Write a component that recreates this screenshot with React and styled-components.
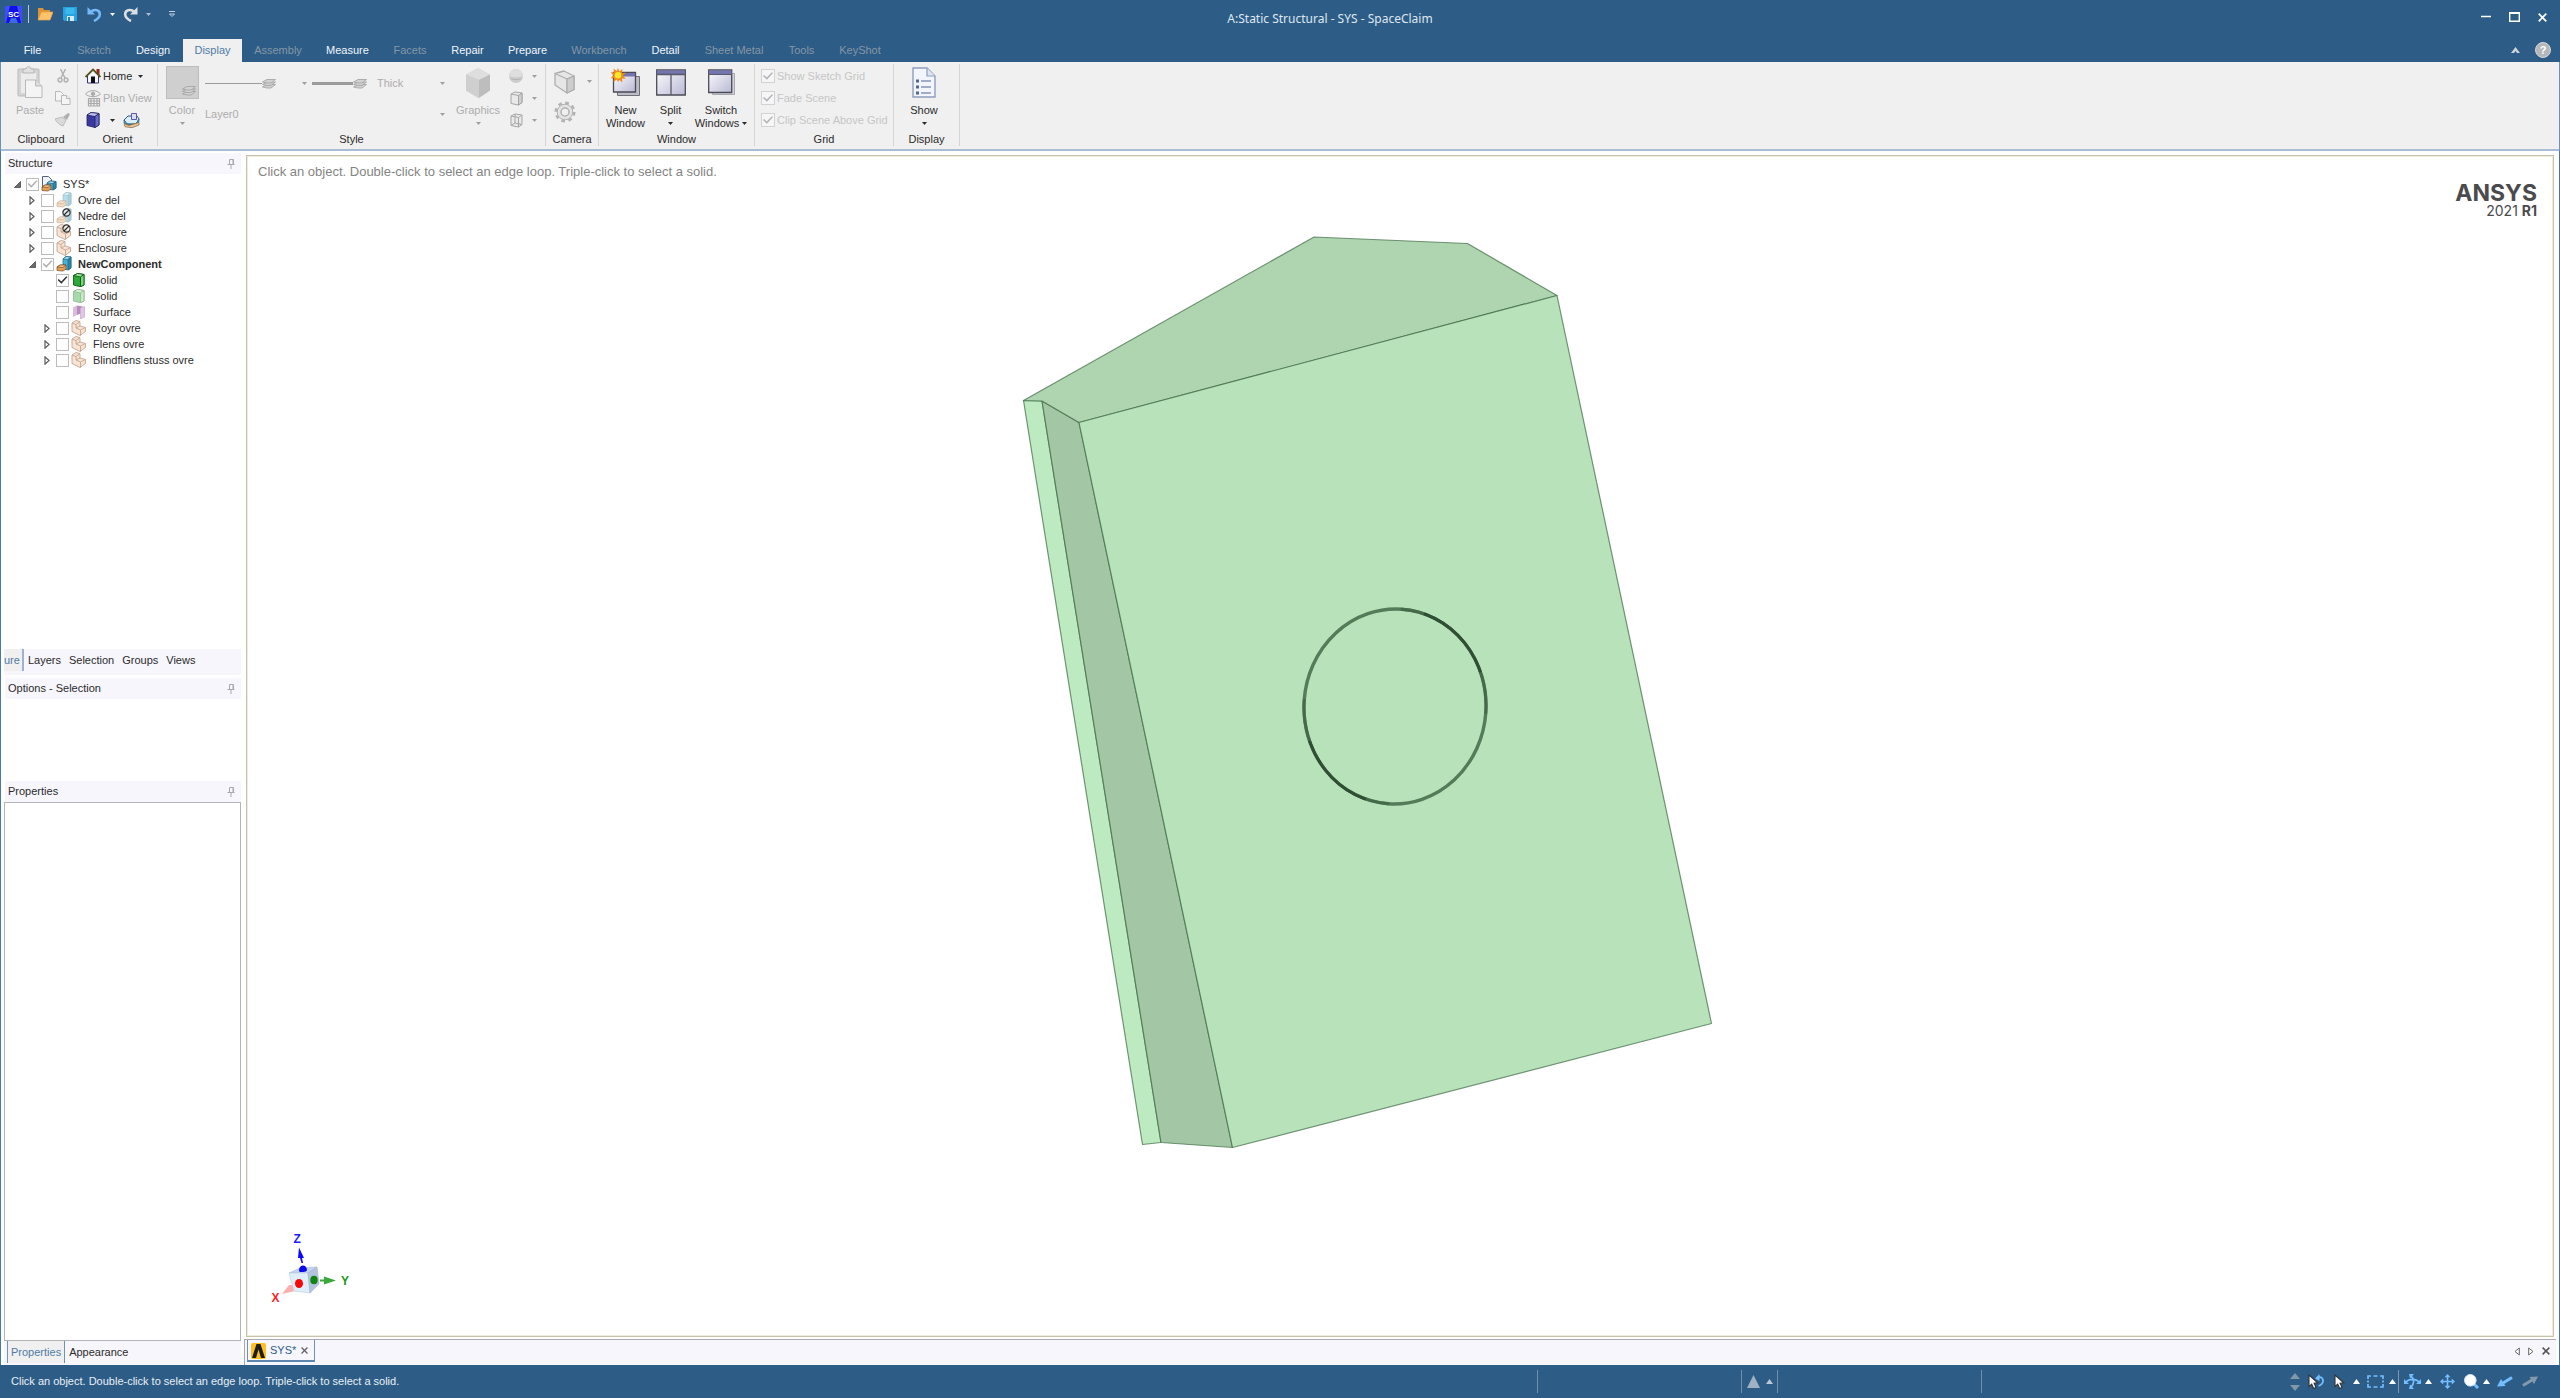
import { useState } from 'react';
import styled, { createGlobalStyle, css } from 'styled-components';

const colors = {
  blue: '#2d5d87',
  ribbon: '#f0f0f0',
  panel: '#f6f6fc',
  text: '#2b2b2b',
  muted: '#adadad',
  tabMuted: '#8495a5',
  accent: '#4f7ba6',
  sky: '#74bdff',
};

const GlobalStyle = createGlobalStyle`
  * {
    box-sizing: border-box;
  }
  body {
    margin: 0;
    color: ${colors.text};
    background: #fff;
    font-family: 'Liberation Sans', Arial, sans-serif;
    font-size: 11px;
    line-height: 13px;
  }
  button, input {
    font: inherit;
    color: inherit;
    margin: 0;
  }
  button {
    padding: 0;
    border: none;
    background: none;
    white-space: nowrap;
  }
  svg {
    display: block;
    flex: none;
  }
`;

const Page = styled.div`
  display: flex;
  flex-direction: column;
  min-height: 100vh;
`;

/* ---------- title bar ---------- */

const TopBar = styled.header`
  background: ${colors.blue};
  color: #fff;
`;

const TitleRow = styled.div`
  display: flex;
  height: 39px;
`;

const QuickAccess = styled.div`
  display: flex;
  align-items: center;
  width: 192px;
  height: 28px;
  padding-left: 5px;
`;

const QuickButton = styled.button`
  display: flex;
  flex: none;
  justify-content: center;
  width: ${({ $w }) => $w}px;
`;

const QuickDivider = styled.span`
  width: 1px;
  height: 18px;
  margin: 0 4px 0 6px;
  background: #b9c6d2;
`;

const WindowTitle = styled.h1`
  flex: 1;
  margin: 0;
  padding-top: 11px;
  text-align: center;
  font: 400 12px/16px 'Noto Sans', 'Open Sans', sans-serif;
  color: #dfe7ee;
`;

const WindowButtons = styled.div`
  display: flex;
  justify-content: flex-end;
  align-items: center;
  width: 92px;
  height: 34px;
  padding-right: 4px;
`;

const WindowButton = styled.button`
  display: flex;
  justify-content: center;
  width: 28px;
`;

const TabRow = styled.nav`
  display: flex;
  height: 23px;
  padding-right: 3px;
`;

const RibbonTab = styled.button`
  width: ${({ $w }) => $w}px;
  height: 23px;
  color: ${({ $off }) => ($off ? colors.tabMuted : '#f2f6fa')};
  ${({ $active }) =>
    $active &&
    css`
      color: ${colors.accent};
      background: ${colors.ribbon};
    `}
`;

const TabSpacer = styled.div`
  flex: 1;
`;

const TabGlyph = styled.span`
  display: flex;
  align-items: center;
  height: 21px;
`;

/* ---------- ribbon ---------- */

const Ribbon = styled.div`
  display: flex;
  height: 89px;
  padding: 2px 0 0 4px;
  background: ${colors.ribbon};
  border: 1px solid #6f93b8;
  border-width: 0 1px;
  box-shadow: inset 0 -1px #a9bdd6, inset 0 -2px #a9bdd6;
`;

const Group = styled.section`
  display: flex;
  flex-direction: column;
  width: ${({ $w }) => $w}px;
  height: 82px;
  border-right: 1px solid #d5d5d5;
`;

const GroupBody = styled.div`
  display: flex;
  flex: 1;
  padding: 1px ${({ $pad = 0 }) => $pad}px 0;
`;

const GroupTitle = styled.h2`
  margin: 0;
  height: 13px;
  font: inherit;
  text-align: center;
`;

const BigButton = styled.button`
  display: flex;
  flex-direction: column;
  align-items: center;
  width: ${({ $w }) => $w}px;
  height: 66px;
  color: ${({ disabled }) => (disabled ? colors.muted : colors.text)};
`;

const BigIcon = styled.span`
  display: flex;
  align-items: center;
  justify-content: center;
  height: 35px;
  margin-bottom: 4px;
`;

const CaretLine = styled.span`
  display: flex;
  align-items: center;
  height: 13px;
  gap: 3px;
`;

const Stack = styled.div`
  display: flex;
  flex-direction: column;
  flex: none;
  width: ${({ $w }) => ($w ? `${$w}px` : 'auto')};
`;

const StackRow = styled.div`
  display: flex;
  align-items: center;
  height: ${({ $h = 22 }) => $h}px;
  padding-left: ${({ $pad = 0 }) => $pad}px;
  padding-right: ${({ $end = 0 }) => $end}px;
`;

const SmallButton = styled.button`
  display: flex;
  align-items: center;
  gap: ${({ $gap = 2 }) => $gap}px;
  color: ${({ disabled }) => (disabled ? colors.muted : colors.text)};
`;

const IconSlot = styled.span`
  display: flex;
  justify-content: center;
  width: 16px;
`;

const CaretGap = styled.span`
  margin-left: 4px;
`;

const SpinGlyph = styled.span`
  margin-left: 8px;
`;

const LineCaret = styled.span`
  margin-left: 26px;
`;

const ColorSwatch = styled.span`
  display: flex;
  align-items: flex-end;
  justify-content: flex-end;
  width: 33px;
  height: 33px;
  padding: 2px;
  border: 1px solid #bdbdbd;
  background: #cfcfcf;
`;

const LineSample = styled.span`
  width: ${({ $w }) => $w}px;
  height: ${({ $thick }) => ($thick ? 3 : 1)}px;
  background: #9b9b9b;
`;

const LineGroup = styled.button`
  display: flex;
  align-items: center;
  margin-right: ${({ $gap }) => $gap}px;
`;

const MutedText = styled.span`
  flex: 1;
  color: ${colors.muted};
`;

const CheckLabel = styled.label`
  display: flex;
  align-items: center;
  gap: 2px;
  height: 22px;
  color: #c6c6c6;
`;

const CheckBox = styled.input.attrs({ type: 'checkbox' })`
  appearance: none;
  display: grid;
  place-items: center;
  flex: none;
  width: ${({ $big }) => ($big ? 14 : 13)}px;
  height: ${({ $big }) => ($big ? 14 : 13)}px;
  border: 1px solid ${({ $big }) => ($big ? '#d2d2d2' : '#bcbcbc')};
  background: ${({ $big }) => ($big ? '#f6f6f8' : '#fff')};
  &:checked::before {
    content: '';
    width: 10px;
    height: 9px;
    background: ${({ $tone = '#b4b4b4' }) => $tone};
    clip-path: polygon(0 50%, 12% 40%, 38% 68%, 88% 8%, 100% 18%, 39% 92%);
  }
`;

/* ---------- workspace ---------- */

const Workspace = styled.div`
  display: flex;
  flex: 1;
  border: 1px solid #4a78a6;
  border-width: 0 1px;
`;

const Sidebar = styled.aside`
  display: grid;
  grid-template-rows: 59fr 100px 66fr;
  row-gap: 3px;
  width: 243px;
  padding: 2px 3px 0 3px;
`;

const Panel = styled.section`
  display: flex;
  flex-direction: column;
  min-height: 0;
`;

const PanelHeader = styled.header`
  display: flex;
  justify-content: space-between;
  align-items: center;
  height: 21px;
  padding: 0 6px 0 3px;
  margin-left: 1px;
  background: ${colors.panel};
`;

const PanelTitle = styled.h2`
  margin: 0;
  font: inherit;
`;

const Tree = styled.ul`
  flex: 1;
  margin: 0;
  padding: 2px 0 0;
  list-style: none;
`;

const TreeRow = styled.li`
  display: flex;
  align-items: center;
  height: 16px;
  padding-left: ${({ $level }) => 6 + $level * 15}px;
  font-weight: ${({ $bold }) => ($bold ? 700 : 400)};
`;

const Expander = styled.button`
  display: flex;
  justify-content: center;
  width: 14px;
  margin-right: 2px;
`;

const TreeLabel = styled.label`
  display: flex;
  align-items: center;
  gap: 6px;
  margin-left: 2px;
  white-space: nowrap;
`;

const PanelTabs = styled.nav`
  display: flex;
  align-items: flex-start;
  height: 26px;
  background: ${colors.panel};
`;

const PanelTab = styled.button`
  height: 22px;
  padding: 0 4px;
  ${({ $active }) =>
    $active &&
    css`
      padding: 0 2px 0 0;
      color: ${colors.accent};
      background: ${colors.ribbon};
      border-right: 2px solid #9cb3cc;
    `}
`;

const PropertyBox = styled.div`
  flex: 1;
  border: 1px solid #b4b4b8;
`;

const BottomTabs = styled(PanelTabs)`
  height: 24px;
  padding-left: 3px;
`;

const BottomTab = styled.button`
  height: 22px;
  padding: 2px 4px 0;
  ${({ $active }) =>
    $active &&
    css`
      padding: 2px 3px 0 3px;
      color: ${colors.accent};
      background: ${colors.ribbon};
      border: 1px solid #6f93b8;
      border-width: 0 1px;
    `}
`;

const Main = styled.main`
  display: flex;
  flex-direction: column;
  flex: 1;
  min-width: 0;
  padding-top: 4px;
`;

const Viewport = styled.div`
  position: relative;
  flex: 1;
  margin: 0 5px 2px 2px;
  border: 1px solid #c6c2ac;
  background: #fff;
  box-shadow: inset 0 0 0 1px #eeece0;
`;

const Hint = styled.p`
  position: absolute;
  left: 11px;
  top: 8px;
  margin: 0;
  font-size: 13px;
  line-height: 15px;
  color: #848484;
`;

const Brand = styled.div`
  position: absolute;
  top: 26px;
  right: 16px;
  text-align: right;
  font-family: Inter, sans-serif;
  color: #4b4b4d;
`;

const BrandName = styled.div`
  font-size: 23px;
  font-weight: 700;
  line-height: 22px;
`;

const BrandVersion = styled.div`
  font-size: 14px;
  font-weight: 400;
  line-height: 14px;
`;

const ModelSvg = styled.svg`
  position: absolute;
  inset: 0;
  width: 100%;
  height: 100%;
`;

const TriadSvg = styled.svg`
  position: absolute;
  left: 15px;
  bottom: 32px;
`;

const DocumentBar = styled.nav`
  display: flex;
  align-items: flex-start;
  height: 26px;
  margin-right: 3px;
  padding: 0 3px 0 2px;
  background: ${colors.panel};
  border-top: 1px solid #a9a9ae;
  border-left: 1px solid #a9a9ae;
`;

const DocumentTab = styled.div`
  display: flex;
  align-items: center;
  gap: 4px;
  height: 22px;
  padding: 1px 5px 0 3px;
  border: 1px solid #6f93b8;
  border-top: none;
  border-bottom: 2px solid #5c86b0;
  color: ${colors.blue};
`;

const DocumentTools = styled.div`
  display: flex;
  align-items: center;
  height: 22px;
  margin-left: auto;
`;

const ToolButton = styled.button`
  display: flex;
  justify-content: center;
  width: ${({ $w }) => $w}px;
`;

/* ---------- status bar ---------- */

const StatusBar = styled.footer`
  display: flex;
  align-items: center;
  height: 33px;
  padding: 0 19px 0 11px;
  background: ${colors.blue};
  color: #e9eff5;
`;

const StatusText = styled.span`
  flex: 1;
`;

const StatusCell = styled.div`
  display: flex;
  align-items: center;
  justify-content: ${({ $end }) => ($end ? 'flex-end' : 'flex-start')};
  gap: 6px;
  width: ${({ $w }) => $w}px;
  height: 23px;
  padding-left: 5px;
  border-left: 1px solid #6f90ad;
`;

const StatusTools = styled.div`
  display: flex;
  align-items: center;
`;

const ToolDivider = styled.span`
  width: 1px;
  height: 23px;
  margin: 0 2px;
  background: #7f97ad;
`;

/* ---------- icons ---------- */

const Caret = ({ color = '#2b2b2b' }) => (
  <svg width="5" height="3" viewBox="0 0 5 3">
    <path d="M0 0h5L2.500 3z" fill={color} />
  </svg>
);

const UpArrow = ({ size = 7, color = '#fff' }) => (
  <svg width={size} height={size === 7 ? 5 : size} viewBox="0 0 10 10" preserveAspectRatio="none">
    <path d="M0 10h10L5 0z" fill={color} />
  </svg>
);

const AppLogo = () => (
  <svg width="17" height="17" viewBox="0 0 17 17">
    <rect width="17" height="17" fill="#1010e6" />
    <path d="M0 0h5L1 17H0zM12 0h5v17h-1z" fill="#3c4cff" />
    <path d="M6 12h5l2 5H4z" fill="#3c6be0" />
    <text x="8.500" y="11" fontSize="8" fontWeight="700" fill="#fff" textAnchor="middle" fontFamily="Liberation Sans">
      SC
    </text>
  </svg>
);

const FolderIcon = () => (
  <svg width="16" height="14" viewBox="0 0 16 14">
    <path d="M1 13V1h5l1 2h6v3" fill="#dd9434" />
    <path d="M1 13 4.500 5H16l-3 8z" fill="#ffc46b" stroke="#e8a244" strokeWidth=".7" />
  </svg>
);

const SaveIcon = () => (
  <svg width="14" height="14" viewBox="0 0 14 14">
    <path d="M0 0h14v14H1.500L0 12.500z" fill="#27a3de" />
    <path d="M2.500 1h9v6h-9z" fill="#3db8ee" />
    <path d="M4 9h7v5H4z" fill="#d7ecf5" />
    <path d="M5 10h2v4H5z" fill="#2581b0" />
  </svg>
);

const TurnIcon = ({ color, flip }) => (
  <svg width="15" height="15" viewBox="0 0 15 15">
    <g transform={flip ? 'translate(15 0) scale(-1 1)' : undefined}>
      <path d="M3 5C8 1.500 13 3 12.800 7.500 12.600 11 10 12.500 7 14" fill="none" stroke={color} strokeWidth="2.600" />
      <path d="M.5 0v7.500H8z" fill={color} />
    </g>
  </svg>
);

const MoreIcon = () => (
  <svg width="6" height="6" viewBox="0 0 6 6">
    <path d="M0 .5h6" stroke="#c3d0dc" />
    <path d="M.5 3h5L3 5.500z" fill="none" stroke="#c3d0dc" />
  </svg>
);

const MinIcon = () => (
  <svg width="10" height="10" viewBox="0 0 10 10">
    <path d="M0 4.500h10" stroke="#fff" strokeWidth="1.500" />
  </svg>
);

const MaxIcon = () => (
  <svg width="11" height="10" viewBox="0 0 11 10">
    <path d="M.7 1h9.600v8.300H.7z" fill="none" stroke="#fff" strokeWidth="1.400" />
    <path d="M0 1h11" stroke="#fff" strokeWidth="2" />
  </svg>
);

const CrossIcon = ({ size = 9, color = '#fff' }) => (
  <svg width={size} height={size} viewBox="0 0 9 9">
    <path d="m.7.7 7.600 7.600M8.300.7.7 8.300" stroke={color} strokeWidth="1.700" />
  </svg>
);

const HelpIcon = () => (
  <svg width="16" height="16" viewBox="0 0 16 16">
    <circle cx="8" cy="8" r="7.500" fill="#b4b8bb" stroke="#d4d6d8" />
    <text x="8" y="12" fontSize="11" fontWeight="700" fill="#fff" textAnchor="middle" fontFamily="Liberation Sans">
      ?
    </text>
  </svg>
);

const RibbonUpIcon = () => (
  <svg width="9" height="6" viewBox="0 0 9 6">
    <path d="M0 6 4.500 0 9 6H6L4.500 4 3 6z" fill="#cfd3d6" />
  </svg>
);

const PasteIcon = () => (
  <svg width="26" height="33" viewBox="0 0 26 33">
    <rect x="1" y="3" width="21" height="27" rx="1" fill="#d4d4d4" stroke="#bababa" />
    <rect x="4" y="7" width="15" height="20" fill="#ececec" />
    <path d="M6 3h3c0-3 5-3 5 0h3v4H6z" fill="#e0e0e0" stroke="#b5b5b5" />
    <path d="M8.500 14h10l6.500 6v11.500H8.500z" fill="#f4f4f4" stroke="#b9b9b9" />
    <path d="M18.500 14v6H25" fill="#ddd" stroke="#b9b9b9" />
  </svg>
);

const CutIcon = () => (
  <svg width="12" height="14" viewBox="0 0 12 14" fill="none" stroke="#b3b3b3" strokeWidth="1.500">
    <path d="M3.500 0 8 9M8.500 0 4 9" />
    <circle cx="3" cy="11" r="1.900" />
    <circle cx="9" cy="11" r="1.900" />
  </svg>
);

const CopyIcon = () => (
  <svg width="16" height="14" viewBox="0 0 16 14" fill="#f4f4f4" stroke="#b8b8b8">
    <path d="M.5.5h5l3 3V10h-8z" />
    <path d="M6.500 4.500h5l3.500 3v6H6.500z" />
    <path d="M11.500 4.500v3H15" />
  </svg>
);

const BrushIcon = () => (
  <svg width="16" height="14" viewBox="0 0 16 14">
    <path d="m0 6 7-2 4 3-3 6c-3-1-6-3-8-7z" fill="#dadada" stroke="#bcbcbc" />
    <path d="m8 4 5-4 2 1-3 6z" fill="#b0b0b0" />
  </svg>
);

const HomeIcon = () => (
  <svg width="16" height="16" viewBox="0 0 16 16">
    <path d="M11.500 1h3v6h-3z" fill="#9b2323" />
    <path d="M2.500 7.500V15h11V7.500L8 2z" fill="#f5f5ff" stroke="#34347e" />
    <path d="M.5 9 8 1.500 15.500 9" fill="none" stroke="#55551c" strokeWidth="1.800" />
    <path d="M6 8.500h4V15H6z" fill="#111" />
  </svg>
);

const PlanViewIcon = () => (
  <svg width="16" height="17" viewBox="0 0 16 17" fill="none" stroke="#a9a9a9">
    <path d="M.5 4C4-.5 12-.5 15.500 4 12 7.500 4 7.500.5 4z" />
    <circle cx="8" cy="3.800" r="1.700" fill="#a9a9a9" />
    <path d="M3.500 8.500h11v7.500h-11zM3.500 11h11M3.500 13.500h11M6 8.500V16M9 8.500V16M12 8.500V16" strokeWidth="1.200" />
  </svg>
);

const BlueBoxIcon = () => (
  <svg width="14" height="16" viewBox="0 0 14 16" stroke="#20205e" strokeWidth=".8">
    <path d="m1 3 4-2.500 8 1V13l-4 2.500-8-2z" fill="#3a3a9e" />
    <path d="m1 3 4-2.500 8 1L9 4.500z" fill="#c2c2f2" />
    <path d="m9 4.500 4-3V13l-4 2.500z" fill="#6a6acb" />
  </svg>
);

const SpinModelIcon = () => (
  <svg width="17" height="16" viewBox="0 0 17 16">
    <path d="m1 8 4-4h9l2 3-3 5H4z" fill="#d9eef6" stroke="#2e5b78" />
    <path d="m1 8 3 4h9l3-5v3l-3 3H4l-3-2z" fill="#55a7c5" stroke="#2e5b78" strokeWidth=".6" />
    <path d="M8.500 1.500h5v6h-5z" fill="#dedcf8" stroke="#5a5aa8" />
    <path d="m1 11.500 5 2 10-3v2.500l-7 2.700-7-1z" fill="#edc596" stroke="#80603a" strokeWidth=".7" />
  </svg>
);

const LayerStackIcon = () => (
  <svg width="14" height="10" viewBox="0 0 14 10" fill="#d2d2d2" stroke="#9f9f9f" strokeWidth=".8">
    <path d="m.5 8 4.500-2.500h8.500L9 9H5z" />
    <path d="m.5 5.500 4.500-2.500h8.500L9 6.500H5z" />
    <path d="m.5 3 4.500-2.500h8.500L9 4H5z" />
  </svg>
);

const GrayCube = () => (
  <svg width="26" height="32" viewBox="0 0 26 32">
    <path d="M1 7.500 13 1l12 6.500v16L13 31 1 23.500z" fill="#d6d6d6" />
    <path d="M1 7.500 13 1l12 6.500L14 13z" fill="#dedede" />
    <path d="M14 13 25 7.500v16L14 31z" fill="#bdbdbd" />
    <path d="M1 7.500 14 13v18L1 23.500z" fill="#cfcfcf" />
  </svg>
);

const SphereIcon = () => (
  <svg width="14" height="14" viewBox="0 0 14 14">
    <circle cx="7" cy="7" r="7" fill="#cdcdcd" />
    <path d="M0 7a7 7 0 0 1 14 0c-4 1.500-10 1.500-14 0z" fill="#dedede" />
    <path d="M2 9.500c3 1.500 7 1.500 10 0" stroke="#b3b3b3" fill="none" />
  </svg>
);

const BoxIcon = ({ wire }) => (
  <svg width="13" height="15" viewBox="0 0 13 15" fill="#e9e9e9" stroke="#a6a6a6" strokeLinejoin="round">
    <path d="m1 3 4-2 7 1v9.500L8.500 14 1 12.500z" />
    <path d="m1 3 7.500 1.500L12 2M8.500 4.500V14" />
    {wire ? <path d="M5 1v9l7 1.500M5 10l-4 2.500" fill="none" /> : <path d="m8.500 4.500 3.500-2.500v9.500L8.500 14z" fill="#cfcfcf" />}
  </svg>
);

const CameraBox = () => (
  <svg width="21" height="24" viewBox="0 0 21 24" fill="#e6e6e6" stroke="#aeaeae" strokeWidth="1.300" strokeLinejoin="round">
    <path d="M1 3.500 10 1l10 5v13.500L13 23 1 15z" />
    <path d="m1 3.500 12 5.500 7-3M13 9v14" />
    <path d="m13 9 7-3v13.500L13 23z" fill="#cdcdcd" />
  </svg>
);

const GearIcon = () => (
  <svg width="22" height="22" viewBox="0 0 22 22">
    <circle cx="11" cy="11" r="9.200" fill="none" stroke="#b2b2b2" strokeWidth="2.600" strokeDasharray="3.600 3.630" />
    <circle cx="11" cy="11" r="7.800" fill="#e3e3e3" stroke="#b2b2b2" />
    <circle cx="11" cy="11" r="4" fill="#f0f0f0" stroke="#b2b2b2" strokeWidth="1.500" />
  </svg>
);

const Gradient = ({ id }) => (
  <linearGradient id={id} x1="0" y1="0" x2="1" y2="1">
    <stop offset="0" stopColor="#fcfcff" />
    <stop offset="1" stopColor="#b9b9d4" />
  </linearGradient>
);

const NewWindowIcon = () => (
  <svg width="30" height="30" viewBox="0 0 30 30">
    <defs>
      <Gradient id="nw" />
    </defs>
    <path d="M6.500 8.500h22v19h-22z" fill="#bcbcc8" stroke="#6f6f78" />
    <path d="M2.500 4.500h22V24h-22z" fill="url(#nw)" stroke="#4b4b55" strokeWidth="1.300" />
    <path d="M3 5h21v3.500H3z" fill="#7474b0" />
    <path
      d="m7 0 1.300 3.500L11.500 1l-.6 4 4-.3-3 3 3 3-4-.3.600 4-3.200-2.500L7 14l-1.300-2.600L2.500 14l.6-4-3.600.3 3-3-3-3 3.600.3-.6-4 3.200 2.500z"
      fill="#f08a1c"
    />
    <circle cx="7" cy="7.300" r="3.300" fill="#ffe926" />
  </svg>
);

const SplitIcon = () => (
  <svg width="30" height="27" viewBox="0 0 30 27">
    <defs>
      <Gradient id="sp" />
    </defs>
    <path d="M.7 1h28.600v25H.7z" fill="url(#sp)" stroke="#4b4b55" strokeWidth="1.300" />
    <path d="M1 1.500h28V5H1z" fill="#7474b0" />
    <path d="M0 5.500h30M15 5v21" stroke="#5a5a66" strokeWidth="1.300" />
  </svg>
);

const SwitchIcon = () => (
  <svg width="27" height="27" viewBox="0 0 27 27">
    <defs>
      <Gradient id="sw" />
    </defs>
    <path d="M4.500 4.500h22v21h-22z" fill="#d2d2dc" stroke="#a9a9b2" />
    <path d="M.7 1h23v22.500H.7z" fill="url(#sw)" stroke="#4b4b55" strokeWidth="1.300" />
    <path d="M1 1.500h22.500V5H1z" fill="#7474b0" />
    <path d="M0 5.500h24" stroke="#5a5a66" />
  </svg>
);

const ShowIcon = () => (
  <svg width="24" height="31" viewBox="0 0 24 31">
    <path d="M1 1h14l8 8v21H1z" fill="#f2f5fb" stroke="#8f9dbd" strokeWidth="1.400" />
    <path d="M15 1v8h8" fill="#dfe4f0" stroke="#8f9dbd" strokeWidth="1.200" />
    <path d="M9 14h10M9 20h10M9 26h10" stroke="#8795b8" strokeWidth="1.500" />
    <path d="M4 14h3M4 20h3M4 26h3" stroke="#55658f" strokeWidth="3" />
  </svg>
);

const PinIcon = () => (
  <svg width="8" height="10" viewBox="0 0 8 10" fill="none" stroke="#a8a8ae">
    <path d="M2.500.5h4v5h-4zM.5 5.500h7M4 6v4" />
    <path d="M6 1v4" />
  </svg>
);

const OpenNode = () => (
  <svg width="7" height="7" viewBox="0 0 7 7">
    <path d="M6.500.5v6h-6z" fill="#6c6c6c" stroke="#4a4a4a" strokeWidth=".8" />
  </svg>
);

const ClosedNode = () => (
  <svg width="6" height="9" viewBox="0 0 6 9">
    <path d="M1 .8v7.400l4-3.700z" fill="#fff" stroke="#5c5c5c" strokeWidth="1.200" />
  </svg>
);

const Hidden = () => (
  <g fill="#f4f4f4" fillOpacity=".6" stroke="#303030" strokeWidth="1.200">
    <circle cx="10.500" cy="4.500" r="3.600" />
    <path d="m8 7 5-5" />
  </g>
);

const ComponentIcon = ({ faded, hidden, doc }) => (
  <svg width="16" height="16" viewBox="0 0 16 16">
    {doc && <path d="M1.500.5h6l3 3V13h-9z" fill="#eef2fa" stroke="#56617c" />}
    <g opacity={faded ? 0.4 : 1} strokeWidth=".7">
      <path d={doc ? 'm6 7 3-2 6 .5v6.500l-3 2-6-1z' : 'm7 3 3-2.500 5 .5v11l-3 2-5-1z'} fill="#45b3d6" stroke="#24627e" />
      <path d={doc ? 'm6 7 3-2 6 .5-3 2z' : 'm7 3 3-2.500 5 .5-3 2.500z'} fill="#a4dcf0" stroke="#24627e" />
      <path d={doc ? 'm12 7.500 3-2v6.500l-3 2z' : 'M12 3.500 15 1v11l-3 2z'} fill="#2a87aa" stroke="#24627e" />
      <path d="m1 11 3-2h6v4l-3 2-6-.5z" fill="#e5a05c" stroke="#7b4a1c" />
      <path d="m1 11 3-2h6l-3 2.500z" fill="#f4c693" stroke="#7b4a1c" />
    </g>
    {hidden && <Hidden />}
  </svg>
);

const StepIcon = ({ hidden }) => (
  <svg width="16" height="16" viewBox="0 0 16 16">
    <g stroke="#c4a692" strokeWidth=".9" strokeLinejoin="round">
      <path d="m1 3 4-2.500 4 1V6l5.500 1.500v4L9 15.500l-8-4z" fill="#f8e4d5" />
      <path d="m1 3 4 1.500V8l4.500 2v5.500M5 4.500l4-3M5 8l4-2M9.500 10l5-2.500" fill="none" />
    </g>
    {hidden && <Hidden />}
  </svg>
);

const SolidIcon = ({ faded }) => (
  <svg width="14" height="14" viewBox="0 0 14 14" opacity={faded ? 0.42 : 1}>
    <g stroke="#0e5a14" strokeWidth=".9" strokeLinejoin="round">
      <path d="m1.500 2.500 4-2 6.500 1V12l-3.500 1.700-7-1.700z" fill="#2fa83a" />
      <path d="m1.500 2.500 4-2 6.500 1L8.500 4z" fill="#a6eaa2" />
      <path d="M8.500 4 12 1.500V12l-3.500 1.700z" fill="#7cd67c" />
    </g>
  </svg>
);

const SurfaceIcon = () => (
  <svg width="14" height="14" viewBox="0 0 14 14">
    <path d="m1 2.500 4-2v9.500l-4 2z" fill="#dcb9de" />
    <path d="m5 .5 6 1-2.500 2v5L5 10z" fill="#b58cbc" />
    <path d="M8.500 3.500 12.500 1.500V12l-4 2z" fill="#e3c6e6" stroke="#c39cc8" strokeWidth=".6" />
  </svg>
);

const DocIcon = () => (
  <svg width="15" height="16" viewBox="0 0 15 16">
    <rect width="15" height="16" rx="2" fill="#ffbf1f" />
    <path d="M5.500 1h4L14 15h-4L7.500 6.500 5 15H1z" fill="#1d1d1b" />
  </svg>
);

const SideArrow = ({ flip }) => (
  <svg width="6" height="9" viewBox="0 0 6 9">
    <path d={flip ? 'M.7 1v7L5 4.500z' : 'M5.300 1v7L1 4.500z'} fill="#fff" stroke="#666" />
  </svg>
);

const CursorPath = () => (
  <path
    d="M1 1v11.500l2.700-2.300 2 4.300 2.300-1-1.900-4.200 3.600-.4z"
    fill="#fff"
    stroke="#333"
    strokeWidth="1.100"
  />
);

const CursorIcon = () => (
  <svg width="12" height="16" viewBox="0 0 12 16">
    <CursorPath />
  </svg>
);

const CursorUndoIcon = () => (
  <svg width="17" height="16" viewBox="0 0 17 16">
    <path d="M9 4c4-2 6.500 0 6 3.500-.3 2.500-2 3.500-4.500 4.500" fill="none" stroke={colors.sky} strokeWidth="1.800" />
    <path d="M7 4.500 11.500 0v7z" fill={colors.sky} />
    <CursorPath />
  </svg>
);

const MarqueeIcon = () => (
  <svg width="17" height="13" viewBox="0 0 17 13">
    <path
      d="M1 4V1h3M6.500 1h4M13 1h3v3M16 5.500v2M16 9v3h-3M10.500 12h-4M4 12H1V9M1 7.500v-2"
      fill="none"
      stroke={colors.sky}
      strokeWidth="1.700"
    />
  </svg>
);

const OrbitIcon = () => (
  <svg width="17" height="15" viewBox="0 0 17 15">
    <path d="M2 8c3-3.500 10-3.500 13 0M7 2c3.500 3 3.500 8 0 11" fill="none" stroke={colors.sky} strokeWidth="1.700" />
    <path d="M0 5v5h5zM17 5v5h-5zM5 0h5L6 4.500zM5 15h5L6 10.500z" fill={colors.sky} />
  </svg>
);

const PanIcon = () => (
  <svg width="15" height="15" viewBox="0 0 15 15">
    <path d="M7.500 2v11M2 7.500h11" stroke={colors.sky} strokeWidth="1.600" />
    <path d="m7.500 0 3 3.300h-6zM7.500 15l3-3.300h-6zM0 7.500l3.300-3v6zM15 7.500l-3.300-3v6z" fill={colors.sky} />
  </svg>
);

const ZoomIcon = () => (
  <svg width="15" height="15" viewBox="0 0 15 15">
    <path d="m9 9 5 5" stroke={colors.sky} strokeWidth="3" />
    <circle cx="6.300" cy="6.300" r="5.800" fill="#fff" stroke="#cfe6fb" />
  </svg>
);

const DiagonalArrow = ({ color, up }) => (
  <svg width="16" height="11" viewBox="0 0 16 11">
    <g transform={up ? 'rotate(180 8 5.500)' : undefined}>
      <path d="m15 1.500-9 5.500" stroke={color} strokeWidth="3" />
      <path d="M0 10.500 4 3l4.500 7z" fill={color} />
    </g>
  </svg>
);

const UpDownIcon = () => (
  <svg width="10" height="18" viewBox="0 0 10 18" fill="#8197aa">
    <path d="M0 6h10L5 0zM0 12h10l-5 6z" />
  </svg>
);

/* ---------- scene ---------- */

const edge = { stroke: '#3f6a45', strokeOpacity: 0.7, strokeWidth: 1.2, strokeLinejoin: 'round' };

const Model = () => (
  <ModelSvg viewBox="247 156 2306 1180">
    <g {...edge}>
      <path d="M1023.500 400.500 1042 401 1161 1142.500 1142.500 1144.500z" fill="#bdeac1" />
      <path d="M1042 401 1079 422.500 1232.500 1147.500 1161 1142.500z" fill="#a3c7a5" />
      <path d="M1023.500 400.500 1314 237 1467.500 243.500 1557 295.500 1079 422.500 1042 401z" fill="#aed5af" />
      <path d="M1079 422.500 1557 295.500 1711.500 1023.500 1232.500 1147.500z" fill="#b8e2ba" />
    </g>
    <g fill="none" transform="rotate(4 1395 706.500)" strokeLinecap="round">
      <ellipse cx="1395" cy="706.500" rx="91" ry="97.500" stroke="#557c59" strokeWidth="3.400" />
      <path
        d="M1395 609A91 97.500 0 0 1 1486 706.500M1395 804A91 97.500 0 0 1 1304 706.500"
        stroke="#456a4a"
        strokeWidth="2.800"
      />
      <path
        d="M1418.600 612.300A91 97.500 0 0 1 1477.500 665.300M1371.400 800.700A91 97.500 0 0 1 1312.500 747.700"
        stroke="#2f4e33"
        strokeWidth="2.800"
      />
    </g>
  </ModelSvg>
);

const Triad = () => (
  <TriadSvg width="92" height="74" viewBox="262 1230 92 74" fontFamily="Liberation Sans" fontSize="12" fontWeight="700">
    <path d="m282 1294 7-9h9l-3 6z" fill="#fbb0b0" />
    <path d="m289 1273 11-5 17-1-9 6z" fill="#c6d4ec" stroke="#a9bbd8" strokeWidth=".6" />
    <path d="m289 1273 19 0 2 20-16-2z" fill="#e0eefa" stroke="#b9cce2" strokeWidth=".6" />
    <path d="m308 1273 9-6 2 17-9 9z" fill="#b4c3de" stroke="#a2b3d0" strokeWidth=".6" />
    <path d="M299 1247.500 304 1258h-2l1 5-1.500 0-1.500-5h-2z" fill="#0a0aff" />
    <path d="M299 1271a4 5 0 0 1 8-1c0 1-2 2-4 2s-4 0-4-1z" fill="#0a0af0" />
    <ellipse cx="299" cy="1283.500" rx="4" ry="4.500" fill="#f80808" />
    <ellipse cx="314" cy="1280" rx="3.700" ry="4.300" fill="#118511" />
    <path d="M320 1279.500h4v-3l12 4-12 4v-3h-4z" fill="#3aa83a" />
    <text x="293.500" y="1243" fill="#1a1aff">Z</text>
    <text x="341" y="1285" fill="#1c951c">Y</text>
    <text x="271.500" y="1302" fill="#f22">X</text>
  </TriadSvg>
);

/* ---------- data ---------- */

const ribbonTabs = [
  { name: 'File', width: 65 },
  { name: 'Sketch', width: 58, off: true },
  { name: 'Design', width: 60 },
  { name: 'Display', width: 59 },
  { name: 'Assembly', width: 72, off: true },
  { name: 'Measure', width: 67 },
  { name: 'Facets', width: 58, off: true },
  { name: 'Repair', width: 57 },
  { name: 'Prepare', width: 63 },
  { name: 'Workbench', width: 80, off: true },
  { name: 'Detail', width: 53 },
  { name: 'Sheet Metal', width: 84, off: true },
  { name: 'Tools', width: 51, off: true },
  { name: 'KeyShot', width: 66, off: true },
];

const treeItems = [
  { label: 'SYS*', level: 0, node: 'open', checked: true, icon: <ComponentIcon doc /> },
  { label: 'Ovre del', level: 1, node: 'closed', icon: <ComponentIcon faded /> },
  { label: 'Nedre del', level: 1, node: 'closed', icon: <ComponentIcon faded hidden /> },
  { label: 'Enclosure', level: 1, node: 'closed', icon: <StepIcon hidden /> },
  { label: 'Enclosure', level: 1, node: 'closed', icon: <StepIcon /> },
  { label: 'NewComponent', level: 1, node: 'open', checked: true, bold: true, icon: <ComponentIcon /> },
  { label: 'Solid', level: 2, checked: true, dark: true, icon: <SolidIcon /> },
  { label: 'Solid', level: 2, icon: <SolidIcon faded /> },
  { label: 'Surface', level: 2, icon: <SurfaceIcon /> },
  { label: 'Royr ovre', level: 2, node: 'closed', icon: <StepIcon /> },
  { label: 'Flens ovre', level: 2, node: 'closed', icon: <StepIcon /> },
  { label: 'Blindflens stuss ovre', level: 2, node: 'closed', icon: <StepIcon /> },
];

const gridOptions = ['Show Sketch Grid', 'Fade Scene', 'Clip Scene Above Grid'];

const hint = 'Click an object. Double-click to select an edge loop. Triple-click to select a solid.';

/* ---------- components ---------- */

const RibbonGroup = ({ title, width, pad, children }) => (
  <Group $w={width}>
    <GroupBody $pad={pad}>{children}</GroupBody>
    <GroupTitle>{title}</GroupTitle>
  </Group>
);

const TopSection = () => {
  const [active, setActive] = useState('Display');
  return (
    <TopBar>
      <TitleRow>
        <QuickAccess>
          <AppLogo />
          <QuickDivider />
          <QuickButton $w={24} aria-label="Open"><FolderIcon /></QuickButton>
          <QuickButton $w={26} aria-label="Save"><SaveIcon /></QuickButton>
          <QuickButton $w={23} aria-label="Undo"><TurnIcon color="#74b8f5" /></QuickButton>
          <QuickButton $w={12} aria-label="Undo list"><Caret color="#fff" /></QuickButton>
          <QuickButton $w={24} aria-label="Redo"><TurnIcon color="#dcdfe2" flip /></QuickButton>
          <QuickButton $w={12} aria-label="Redo list"><Caret color="#aebccb" /></QuickButton>
          <QuickButton $w={36} aria-label="Customize"><MoreIcon /></QuickButton>
        </QuickAccess>
        <WindowTitle>A:Static Structural - SYS - SpaceClaim</WindowTitle>
        <WindowButtons>
          <WindowButton aria-label="Minimize"><MinIcon /></WindowButton>
          <WindowButton aria-label="Maximize"><MaxIcon /></WindowButton>
          <WindowButton aria-label="Close"><CrossIcon /></WindowButton>
        </WindowButtons>
      </TitleRow>
      <TabRow>
        {ribbonTabs.map(({ name, off, width }) => (
          <RibbonTab key={name} $w={width} $off={off} $active={active === name} onClick={() => setActive(name)}>
            {name}
          </RibbonTab>
        ))}
        <TabSpacer />
        <WindowButton aria-label="Collapse ribbon"><TabGlyph><RibbonUpIcon /></TabGlyph></WindowButton>
        <WindowButton aria-label="Help"><TabGlyph><HelpIcon /></TabGlyph></WindowButton>
      </TabRow>
    </TopBar>
  );
};

const RibbonSection = () => (
  <Ribbon>
    <RibbonGroup title="Clipboard" width={73}>
      <BigButton $w={50} disabled>
        <BigIcon><PasteIcon /></BigIcon>
        Paste
      </BigButton>
      <Stack>
        {[<CutIcon key="Cut" />, <CopyIcon key="Copy" />, <BrushIcon key="Format" />].map((icon) => (
          <StackRow key={icon.key}>
            <SmallButton disabled aria-label={icon.key}><IconSlot>{icon}</IconSlot></SmallButton>
          </StackRow>
        ))}
      </Stack>
    </RibbonGroup>
    <RibbonGroup title="Orient" width={80} pad={7}>
      <Stack>
        <StackRow>
          <SmallButton><HomeIcon />Home<CaretGap><Caret /></CaretGap></SmallButton>
        </StackRow>
        <StackRow>
          <SmallButton disabled><PlanViewIcon />Plan View</SmallButton>
        </StackRow>
        <StackRow $pad={1}>
          <SmallButton $gap={10} aria-label="Orientation"><BlueBoxIcon /><Caret /></SmallButton>
          <SmallButton aria-label="Spin"><SpinGlyph><SpinModelIcon /></SpinGlyph></SmallButton>
        </StackRow>
      </Stack>
    </RibbonGroup>
    <RibbonGroup title="Style" width={388} pad={1}>
      <BigButton $w={46} disabled>
        <BigIcon><ColorSwatch><LayerStackIcon /></ColorSwatch></BigIcon>
        Color
        <CaretLine><Caret color="#a0a0a0" /></CaretLine>
      </BigButton>
      <Stack $w={243}>
        <StackRow $h={37} $end={3}>
          <LineGroup disabled aria-label="Line style" $gap={5}>
            <LineSample $w={57} />
            <LayerStackIcon />
            <LineCaret><Caret color="#a0a0a0" /></LineCaret>
          </LineGroup>
          <LineGroup disabled aria-label="Line weight" $gap={10}>
            <LineSample $w={41} $thick />
            <LayerStackIcon />
          </LineGroup>
          <MutedText>Thick</MutedText>
          <Caret color="#a0a0a0" />
        </StackRow>
        <StackRow $h={24} $end={3}>
          <MutedText>Layer0</MutedText>
          <Caret color="#a0a0a0" />
        </StackRow>
      </Stack>
      <BigButton $w={60} disabled>
        <BigIcon><GrayCube /></BigIcon>
        Graphics
        <CaretLine><Caret color="#a0a0a0" /></CaretLine>
      </BigButton>
      <Stack>
        {[<SphereIcon key="Shaded" />, <BoxIcon key="Edges" />, <BoxIcon key="Wireframe" wire />].map((icon) => (
          <StackRow key={icon.key}>
            <SmallButton $gap={8} disabled aria-label={icon.key}>
              <IconSlot>{icon}</IconSlot>
              <Caret color="#a0a0a0" />
            </SmallButton>
          </StackRow>
        ))}
      </Stack>
    </RibbonGroup>
    <RibbonGroup title="Camera" width={53} pad={8}>
      <Stack>
        <StackRow $h={33}>
          <SmallButton $gap={12} disabled aria-label="Projection"><CameraBox /><Caret color="#a0a0a0" /></SmallButton>
        </StackRow>
        <StackRow $h={28}>
          <SmallButton disabled aria-label="Camera options"><GearIcon /></SmallButton>
        </StackRow>
      </Stack>
    </RibbonGroup>
    <RibbonGroup title="Window" width={156} pad={2}>
      <BigButton $w={49}>
        <BigIcon><NewWindowIcon /></BigIcon>
        New
        <CaretLine>Window</CaretLine>
      </BigButton>
      <BigButton $w={41}>
        <BigIcon><SplitIcon /></BigIcon>
        Split
        <CaretLine><Caret /></CaretLine>
      </BigButton>
      <BigButton $w={60}>
        <BigIcon><SwitchIcon /></BigIcon>
        Switch
        <CaretLine>Windows<Caret /></CaretLine>
      </BigButton>
    </RibbonGroup>
    <RibbonGroup title="Grid" width={139} pad={6}>
      <Stack>
        {gridOptions.map((option) => (
          <CheckLabel key={option}>
            <CheckBox $big defaultChecked disabled />
            {option}
          </CheckLabel>
        ))}
      </Stack>
    </RibbonGroup>
    <RibbonGroup title="Display" width={66} pad={2}>
      <BigButton $w={56}>
        <BigIcon><ShowIcon /></BigIcon>
        Show
        <CaretLine><Caret /></CaretLine>
      </BigButton>
    </RibbonGroup>
  </Ribbon>
);

const StructureTree = () => (
  <Tree>
    {treeItems.map(({ label, level, node, checked, bold, dark, icon }, i) => (
      <TreeRow key={i} $level={level} $bold={bold}>
        <Expander aria-label={node ? `Toggle ${label}` : undefined} disabled={!node}>
          {node === 'open' && <OpenNode />}
          {node === 'closed' && <ClosedNode />}
        </Expander>
        <CheckBox id={`node-${i}`} defaultChecked={checked} $tone={dark ? '#333' : '#b0b0b0'} />
        <TreeLabel htmlFor={`node-${i}`}>
          <IconSlot>{icon}</IconSlot>
          {label}
        </TreeLabel>
      </TreeRow>
    ))}
  </Tree>
);

const SidePanels = () => (
  <Sidebar>
    <Panel>
      <PanelHeader>
        <PanelTitle>Structure</PanelTitle>
        <PinIcon />
      </PanelHeader>
      <StructureTree />
      <PanelTabs>
        <PanelTab $active aria-label="Structure">ure</PanelTab>
        {['Layers', 'Selection', 'Groups', 'Views'].map((name) => (
          <PanelTab key={name}>{name}</PanelTab>
        ))}
      </PanelTabs>
    </Panel>
    <Panel>
      <PanelHeader>
        <PanelTitle>Options - Selection</PanelTitle>
        <PinIcon />
      </PanelHeader>
    </Panel>
    <Panel>
      <PanelHeader>
        <PanelTitle>Properties</PanelTitle>
        <PinIcon />
      </PanelHeader>
      <PropertyBox />
      <BottomTabs>
        <BottomTab $active>Properties</BottomTab>
        <BottomTab>Appearance</BottomTab>
      </BottomTabs>
    </Panel>
  </Sidebar>
);

const App = () => (
  <Page>
    <GlobalStyle />
    <TopSection />
    <RibbonSection />
    <Workspace>
      <SidePanels />
      <Main>
        <Viewport>
          <Model />
          <Hint>{hint}</Hint>
          <Brand>
            <BrandName>ANSYS</BrandName>
            <BrandVersion>2021 <b>R1</b></BrandVersion>
          </Brand>
          <Triad />
        </Viewport>
        <DocumentBar>
          <DocumentTab>
            <DocIcon />
            SYS*
            <ToolButton $w={9} aria-label="Close SYS"><CrossIcon size={7} color="#666" /></ToolButton>
          </DocumentTab>
          <DocumentTools>
            <ToolButton $w={14} aria-label="Previous"><SideArrow /></ToolButton>
            <ToolButton $w={14} aria-label="Next"><SideArrow flip /></ToolButton>
            <ToolButton $w={15} aria-label="Close"><CrossIcon size={8} color="#555" /></ToolButton>
          </DocumentTools>
        </DocumentBar>
      </Main>
    </Workspace>
    <StatusBar>
      <StatusText>{hint}</StatusText>
      <StatusCell $w={204} />
      <StatusCell $w={36}>
        <UpArrow size={13} color="#9fb1c3" />
        <UpArrow color="#b9c8d6" />
      </StatusCell>
      <StatusCell $w={204} />
      <StatusCell $w={560} $end>
        <StatusTools>
          <ToolButton $w={14} aria-label="Scroll"><UpDownIcon /></ToolButton>
          <ToolButton $w={28} aria-label="Revert selection"><CursorUndoIcon /></ToolButton>
          <ToolButton $w={20} aria-label="Select"><CursorIcon /></ToolButton>
          <ToolButton $w={12} aria-label="Select options"><UpArrow /></ToolButton>
          <ToolButton $w={26} aria-label="Box select"><MarqueeIcon /></ToolButton>
          <ToolButton $w={8} aria-label="Box options"><UpArrow /></ToolButton>
          <ToolDivider />
          <ToolButton $w={22} aria-label="Spin"><OrbitIcon /></ToolButton>
          <ToolButton $w={10} aria-label="Spin options"><UpArrow /></ToolButton>
          <ToolButton $w={28} aria-label="Pan"><PanIcon /></ToolButton>
          <ToolButton $w={20} aria-label="Zoom"><ZoomIcon /></ToolButton>
          <ToolButton $w={10} aria-label="Zoom options"><UpArrow /></ToolButton>
          <ToolButton $w={28} aria-label="Previous view"><DiagonalArrow color={colors.sky} /></ToolButton>
          <ToolButton $w={22} aria-label="Next view"><DiagonalArrow color="#8599ac" up /></ToolButton>
        </StatusTools>
      </StatusCell>
    </StatusBar>
  </Page>
);

export default App;
